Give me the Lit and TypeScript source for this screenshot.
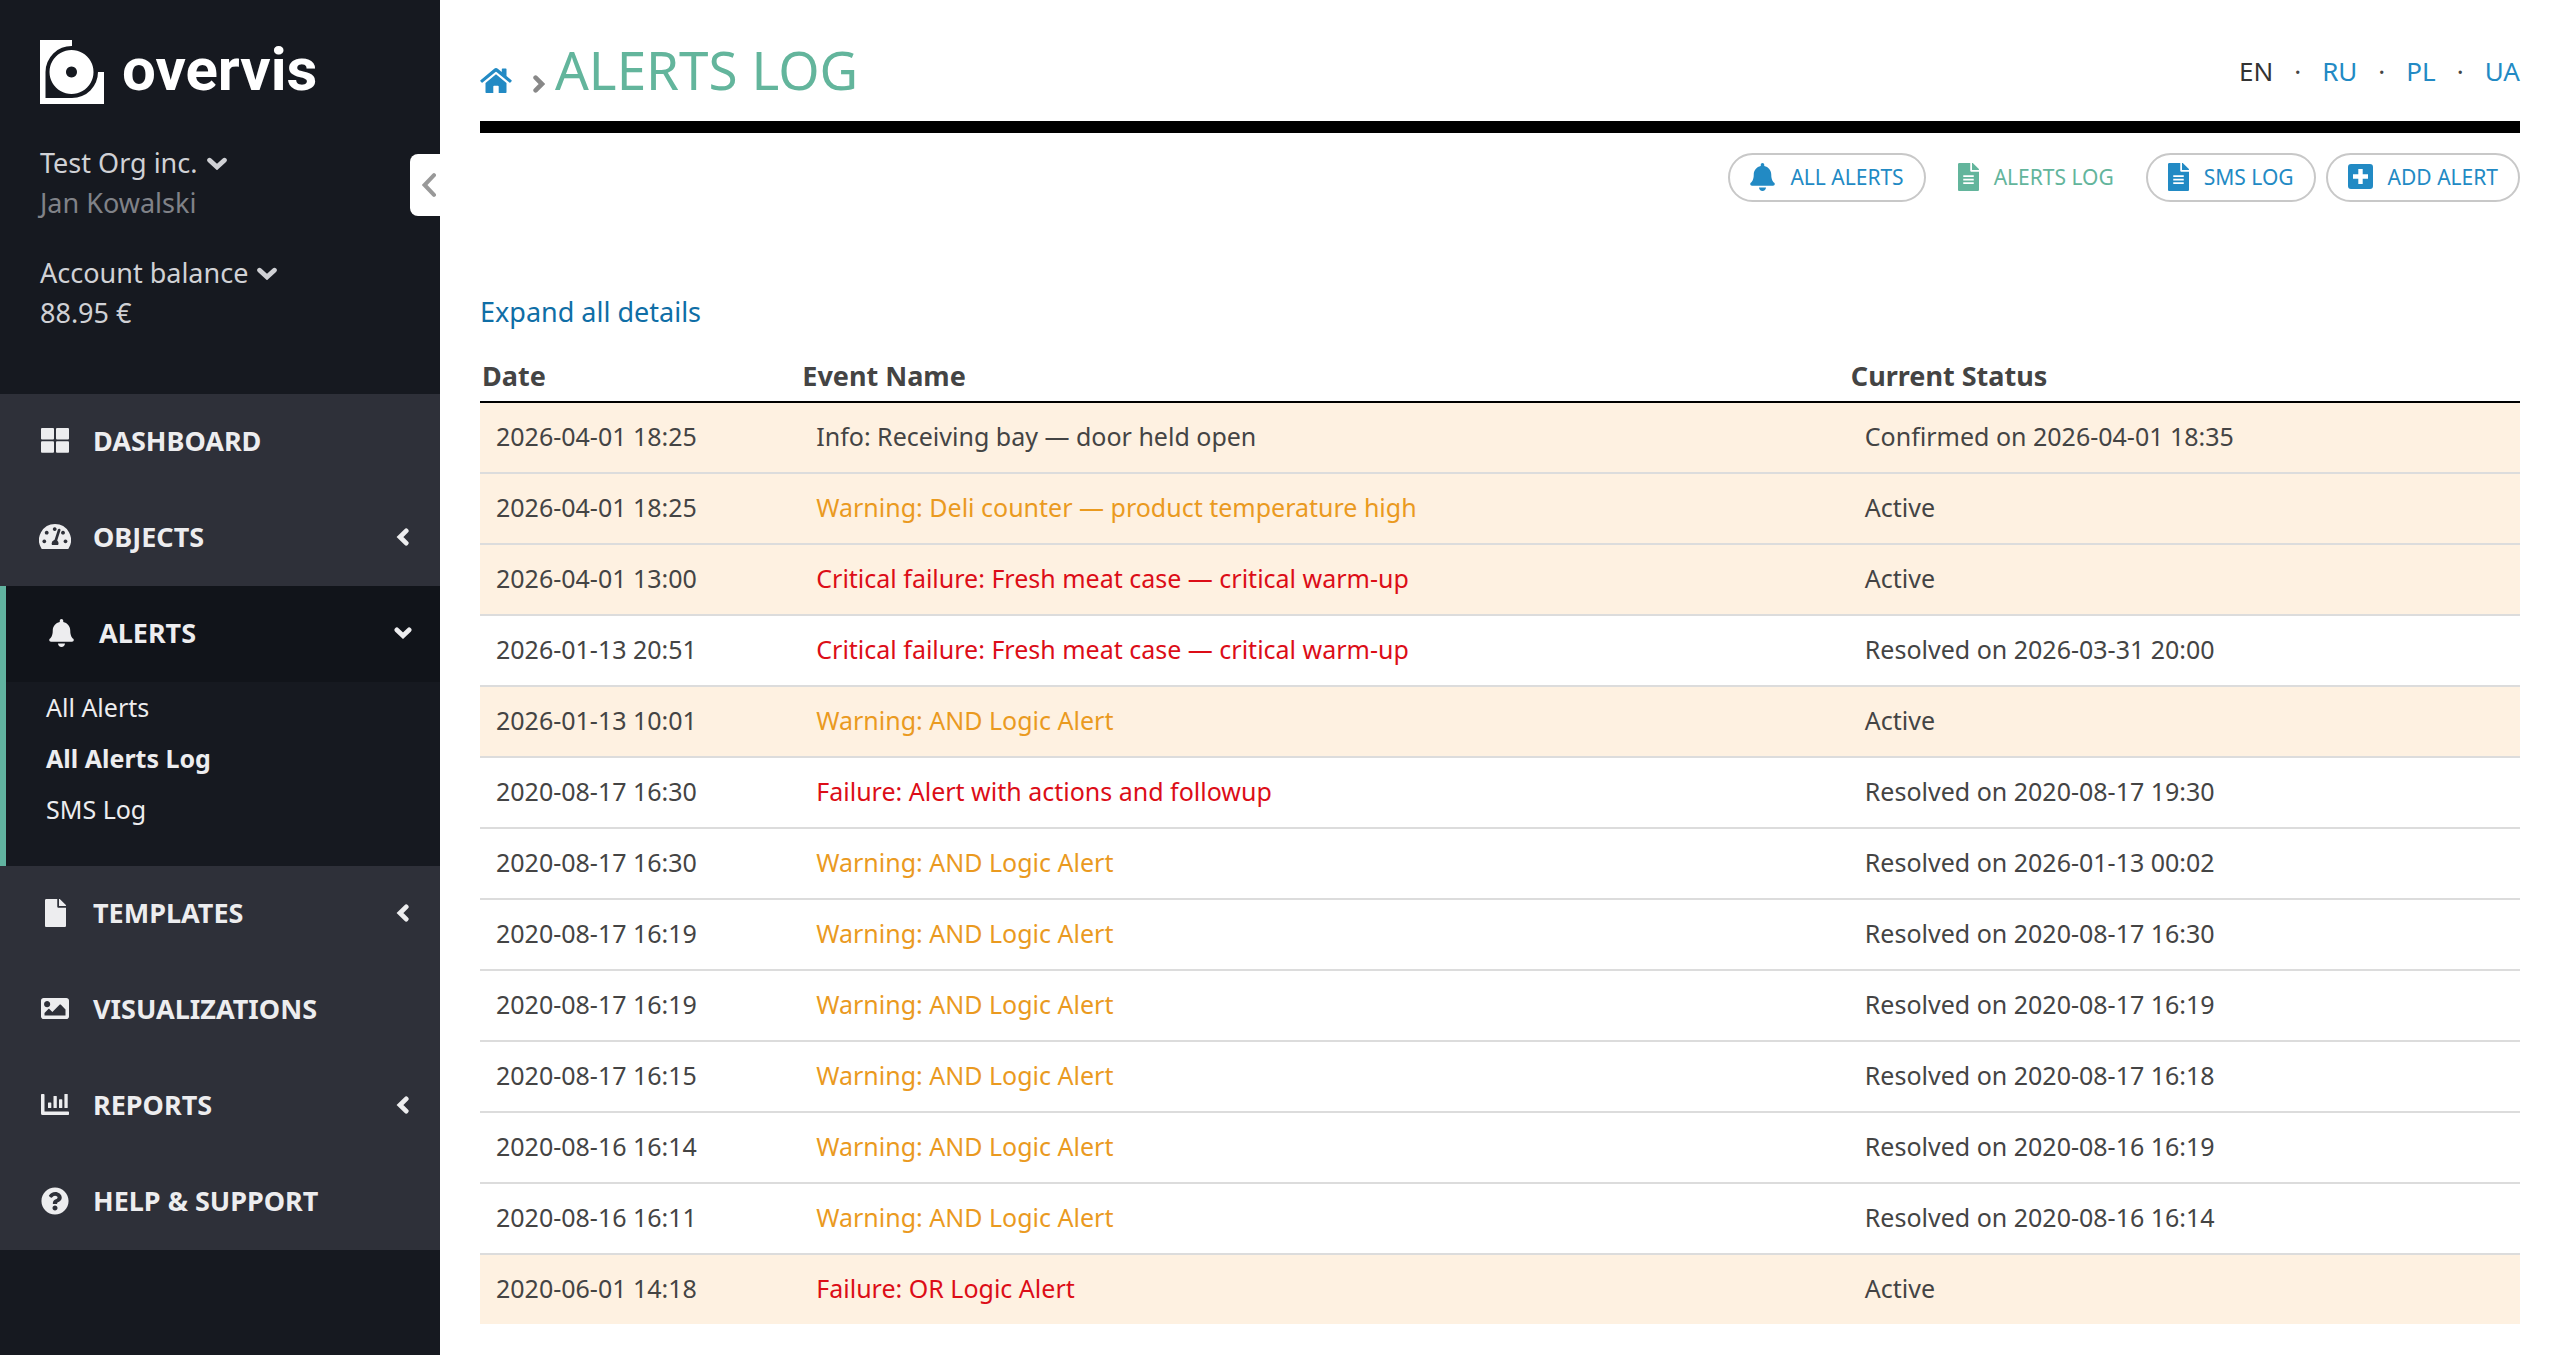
import { LitElement, html, css, svg } from "lit";
import { customElement, property, state } from "lit/decorators.js";
import { classMap } from "lit/directives/class-map.js";

const FILE_BODY =
  "M224 136V0H24C10.7 0 0 10.7 0 24v464c0 13.3 10.7 24 24 24h336c13.3 0 24-10.7 24-24V160H248c-13.2 0-24-10.8-24-24z";
const FILE_CORNER =
  "M384 121.900v6.100H256V0h6.100c6.400 0 12.500 2.500 17 7l97.900 98c4.500 4.500 7 10.600 7 16.900z";

type Glyph = { w: number; h: number; box: string; art: unknown };

const GLYPHS: Record<string, Glyph> = {
  grid: {
    w: 28,
    h: 25,
    box: "0 0 28 25",
    art: svg`<rect width="13" height="11.500" rx="1"/><rect x="15" width="13" height="11.500" rx="1"/><rect y="13.300" width="13" height="11.500" rx="1"/><rect x="15" y="13.300" width="13" height="11.500" rx="1"/>`,
  },
  gauge: {
    w: 32,
    h: 25,
    box: "0 0 32 25",
    art: svg`<path fill-rule="evenodd" d="M16 0A16 16 0 0 0 2.400 24.400Q2.800 25 3.600 25H28.400Q29.200 25 29.600 24.400A16 16 0 0 0 16 0ZM15.700 3.200a1.900 1.900 0 1 0 .01 0ZM7.700 6.800a1.900 1.900 0 1 0 .01 0ZM24 6.800a1.900 1.900 0 1 0 .01 0ZM5.300 15.500a1.900 1.900 0 1 0 .01 0ZM26.500 15.500a1.900 1.900 0 1 0 .01 0ZM20.200 4.800Q21.600 4.800 21.500 6.200L18.200 16.500Q20.400 18.500 19 21H13Q11.600 17.500 15.600 15.700L18.900 5.600Q19.300 4.800 20.200 4.800Z"/>`,
  },
  bell: {
    w: 25,
    h: 28,
    box: "0 0 448 512",
    art: svg`<path d="M224 512c35.320 0 63.970-28.650 63.970-64H160.030c0 35.350 28.650 64 63.970 64zm215.390-149.710c-19.320-20.760-55.470-51.990-55.470-154.290 0-77.700-54.480-139.900-127.940-155.160V32c0-17.670-14.320-32-31.980-32s-31.980 14.330-31.980 32v20.840C118.560 68.100 64.080 130.300 64.080 208c0 102.300-36.150 133.530-55.470 154.290-6 6.450-8.660 14.160-8.610 21.710.11 16.400 12.980 32 32.100 32h383.800c19.120 0 32-15.600 32.100-32 .05-7.550-2.610-15.270-8.610-21.710z"/>`,
  },
  file: {
    w: 21,
    h: 28,
    box: "0 0 384 512",
    art: svg`<path d=${FILE_BODY}/><path d=${FILE_CORNER}/>`,
  },
  fileLines: {
    w: 21,
    h: 28,
    box: "0 0 384 512",
    art: svg`<path fill-rule="evenodd" d=${FILE_BODY + "M96 224V256H288V224ZM96 288V320H288V288ZM96 352V384H288V352Z"}/><path d=${FILE_CORNER}/>`,
  },
  image: {
    w: 28,
    h: 21,
    box: "0 64 512 384",
    art: svg`<path fill-rule="evenodd" d="M464 448H48c-26.510 0-48-21.490-48-48V112c0-26.510 21.490-48 48-48h416c26.510 0 48 21.490 48 48v288c0 26.510-21.490 48-48 48zM112 120c-30.928 0-56 25.072-56 56s25.072 56 56 56 56-25.072 56-56-25.072-56-56-56zM64 384h384V272l-87.515-87.515c-4.686-4.686-12.284-4.686-16.971 0L208 320l-55.515-55.515c-4.686-4.686-12.284-4.686-16.971 0L64 336v48z"/>`,
  },
  chart: {
    w: 28,
    h: 21,
    box: "0 0 28 21",
    art: svg`<path d="M0 .8Q0 0 .8 0H2.700Q3.500 0 3.500 .8V17.500H27.200Q28 17.500 28 18.300V20.200Q28 21 27.200 21H1.500Q0 21 0 19.500Z"/><rect x="7" y="8.500" width="3.300" height="5.500" rx=".6"/><rect x="12.500" y="2" width="3.300" height="12" rx=".6"/><rect x="18" y="5.300" width="3.300" height="8.700" rx=".6"/><rect x="23.400" y="0" width="3.300" height="14" rx=".6"/>`,
  },
  help: {
    w: 28,
    h: 28,
    box: "0 0 512 512",
    art: svg`<path fill-rule="evenodd" d="M504 256c0 136.997-111.043 248-248 248S8 392.997 8 256C8 119.083 119.043 8 256 8s248 111.083 248 248zM262.655 90c-54.497 0-89.255 22.957-116.549 63.758-3.536 5.286-2.353 12.415 2.715 16.258l34.699 26.310c5.205 3.947 12.621 3.008 16.665-2.122 17.864-22.658 30.113-35.797 57.303-35.797 20.429 0 45.698 13.148 45.698 32.958 0 14.976-12.363 22.667-32.534 33.976C247.128 238.528 216 254.941 216 296v4c0 6.627 5.373 12 12 12h56c6.627 0 12-5.373 12-12v-1.333c0-28.462 83.186-29.647 83.186-106.667 0-58.002-60.165-102-116.531-102zM256 338c-25.365 0-46 20.635-46 46 0 25.364 20.635 46 46 46s46-20.636 46-46c0-25.365-20.635-46-46-46z"/>`,
  },
  plus: {
    w: 25,
    h: 25,
    box: "0 0 25 25",
    art: svg`<path fill-rule="evenodd" d="M3 0H22Q25 0 25 3V22Q25 25 22 25H3Q0 25 0 22V3Q0 0 3 0ZM10.300 5V10.300H5V14.700H10.300V20H14.700V14.700H20V10.300H14.700V5Z"/>`,
  },
  home: {
    w: 32,
    h: 25,
    box: "0 0 32 25",
    art: svg`<path d="M16 0Q17 0 17.800 .7L21.800 4V1.200Q21.800 .5 22.500 .5H25.800Q26.500 .5 26.500 1.200V7.900L31.500 12.200Q32 12.700 31.600 13.200L30.400 14.600Q29.900 15 29.400 14.600L16.500 4Q16 3.700 15.500 4L2.600 14.600Q2.100 15 1.600 14.600L.4 13.200Q0 12.700 .5 12.200L14.200 .7Q15 0 16 0Z"/><path d="M16 6.300L26.500 15V24.200Q26.500 25 25.700 25H18.700V18.600Q18.700 17.800 17.900 17.800H14.100Q13.300 17.800 13.300 18.600V25H6.300Q5.500 25 5.500 24.200V15Z"/>`,
  },
  down: {
    w: 20,
    h: 13,
    box: "0 0 20 13",
    art: svg`<path class="line" stroke-width="4.800" d="M2.600 3.200L10 10L17.400 3.200"/>`,
  },
  downSmall: {
    w: 18,
    h: 12,
    box: "0 0 18 12",
    art: svg`<path class="line" stroke-width="4.800" d="M2.900 2.900L9 8.700L15.100 2.900"/>`,
  },
  left: {
    w: 18,
    h: 18,
    box: "0 0 18 18",
    art: svg`<path class="line" stroke-width="4.800" d="M12.200 2.900L6 9L12.200 15.100"/>`,
  },
  right: {
    w: 12,
    h: 18,
    box: "0 0 12 18",
    art: svg`<path class="line" stroke-width="4.600" d="M2.600 2.700L8.900 9L2.600 15.300"/>`,
  },
  collapse: {
    w: 14,
    h: 24,
    box: "0 0 14 24",
    art: svg`<path class="line" stroke-width="4" d="M12 2.200L2.600 12L12 21.800"/>`,
  },
};

@customElement("ov-icon")
class OvIcon extends LitElement {
  @property() name = "";
  static styles = css`
    :host {
      display: inline-flex;
      flex: none;
    }
    .glyph {
      display: block;
      fill: currentColor;
    }
    .line {
      fill: none;
      stroke: currentColor;
      stroke-linecap: round;
    }
  `;
  render() {
    const g = GLYPHS[this.name];
    return html`<svg class="glyph" width=${g.w} height=${g.h} viewBox=${g.box} aria-hidden="true">${g.art}</svg>`;
  }
}

type NavItem = { label: string; icon: string; children?: string[]; current?: string };

const NAV: NavItem[] = [
  { label: "DASHBOARD", icon: "grid" },
  { label: "OBJECTS", icon: "gauge", children: [] },
  { label: "ALERTS", icon: "bell", children: ["All Alerts", "All Alerts Log", "SMS Log"], current: "All Alerts Log" },
  { label: "TEMPLATES", icon: "file", children: [] },
  { label: "VISUALIZATIONS", icon: "image" },
  { label: "REPORTS", icon: "chart", children: [] },
  { label: "HELP & SUPPORT", icon: "help" },
];

@customElement("ov-sidebar")
class OvSidebar extends LitElement {
  @state() private open = "ALERTS";

  static styles = css`
    :host {
      display: block;
      position: relative;
      box-sizing: border-box;
      background: #161920;
      color: #d0d1d5;
      font-size: 27px;
      line-height: 40px;
    }
    button {
      font: inherit;
      color: inherit;
      background: none;
      border: 0;
      padding: 0;
      margin: 0;
      text-align: left;
      cursor: pointer;
    }
    a {
      color: inherit;
      text-decoration: none;
    }
    .brand {
      display: flex;
      align-items: center;
      gap: 18px;
      height: 64px;
      padding: 40px 40px 0;
      color: #fff;
    }
    .mark {
      display: block;
      fill: #fff;
    }
    .word {
      padding-bottom: 4px;
      font-family: Roboto, "Noto Sans", sans-serif;
      font-weight: 700;
      font-size: 60px;
      line-height: 64px;
    }
    .account {
      display: flex;
      flex-direction: column;
      align-items: flex-start;
      padding: 39px 40px 0;
    }
    .picker {
      display: flex;
      align-items: center;
      gap: 9px;
    }
    .user {
      color: #808288;
      margin-bottom: 30px;
    }
    .menu {
      list-style: none;
      margin: 61px 0 0;
      padding: 0;
      background: #2e3039;
      color: #ededef;
    }
    .item {
      display: flex;
      align-items: center;
      width: 100%;
      box-sizing: border-box;
      height: 96px;
      padding: 0 28px 3px 40px;
      font-weight: 700;
    }
    .slot {
      display: flex;
      justify-content: center;
      width: 30px;
      margin-right: 23px;
    }
    .label {
      flex: 1;
    }
    .active {
      border-left: 6px solid #61b3a0;
      background: #161920;
    }
    .active .item {
      background: #11141a;
    }
    .sub {
      list-style: none;
      margin: 0;
      padding: 0 40px 31px;
      font-size: 25px;
      line-height: 51px;
    }
    .current {
      font-weight: 700;
    }
    .tab {
      position: absolute;
      top: 154px;
      right: 0;
      display: flex;
      align-items: center;
      justify-content: flex-end;
      width: 30px;
      height: 62px;
      padding-right: 4px;
      border-radius: 8px 0 0 8px;
      background: #fff;
      color: #999;
    }
  `;

  private entry(item: NavItem) {
    const isOpen = item.label === this.open;
    const inner = html`<span class="slot"><ov-icon name=${item.icon}></ov-icon></span
      ><span class="label">${item.label}</span>
      ${item.children ? html`<ov-icon name=${isOpen ? "downSmall" : "left"}></ov-icon>` : ""}`;
    return html`<li class=${classMap({ active: isOpen })}>
      ${item.children
        ? html`<button
            class="item"
            aria-expanded=${isOpen ? "true" : "false"}
            @click=${() => (this.open = isOpen ? "" : item.label)}
          >
            ${inner}
          </button>`
        : html`<a class="item" href="#">${inner}</a>`}
      ${isOpen && item.children?.length
        ? html`<ul class="sub">
            ${item.children.map(
              (c) => html`<li><a href="#" class=${classMap({ current: c === item.current })}>${c}</a></li>`
            )}
          </ul>`
        : ""}
    </li>`;
  }

  render() {
    return html`
      <div class="brand">
        <svg class="mark" width="64" height="64" viewBox="0 0 64 64" aria-hidden="true">
          <path d="M0 0H32V6A26 26 0 0 0 5.500 32V58H32A26 26 0 0 0 58 32H64V64H0Z" />
          <path fill-rule="evenodd" d="M31.500 10A22 22 0 1 0 31.510 10ZM31.500 26.500A5.500 5.500 0 1 1 31.490 26.500Z" />
        </svg>
        <span class="word">overvis</span>
      </div>
      <div class="account">
        <button class="picker">Test Org inc.<ov-icon name="down"></ov-icon></button>
        <span class="user">Jan Kowalski</span>
        <button class="picker">Account balance<ov-icon name="down"></ov-icon></button>
        <span>88.95 €</span>
      </div>
      <nav>
        <ul class="menu">
          ${NAV.map((i) => this.entry(i))}
        </ul>
      </nav>
      <button class="tab" aria-label="Collapse menu"><ov-icon name="collapse"></ov-icon></button>
    `;
  }
}

type Level = "info" | "warning" | "failure";
type Row = { date: string; name: string; level: Level; status: string; open: boolean };

const row = (date: string, level: Level, name: string, status: string, open = false): Row => ({
  date,
  name,
  level,
  status,
  open,
});

const LOGIC = "Warning: AND Logic Alert";

const ROWS: Row[] = [
  row("2026-04-01 18:25", "info", "Info: Receiving bay — door held open", "Confirmed on 2026-04-01 18:35", true),
  row("2026-04-01 18:25", "warning", "Warning: Deli counter — product temperature high", "Active", true),
  row("2026-04-01 13:00", "failure", "Critical failure: Fresh meat case — critical warm-up", "Active", true),
  row("2026-01-13 20:51", "failure", "Critical failure: Fresh meat case — critical warm-up", "Resolved on 2026-03-31 20:00"),
  row("2026-01-13 10:01", "warning", LOGIC, "Active", true),
  row("2020-08-17 16:30", "failure", "Failure: Alert with actions and followup", "Resolved on 2020-08-17 19:30"),
  row("2020-08-17 16:30", "warning", LOGIC, "Resolved on 2026-01-13 00:02"),
  row("2020-08-17 16:19", "warning", LOGIC, "Resolved on 2020-08-17 16:30"),
  row("2020-08-17 16:19", "warning", LOGIC, "Resolved on 2020-08-17 16:19"),
  row("2020-08-17 16:15", "warning", LOGIC, "Resolved on 2020-08-17 16:18"),
  row("2020-08-16 16:14", "warning", LOGIC, "Resolved on 2020-08-16 16:19"),
  row("2020-08-16 16:11", "warning", LOGIC, "Resolved on 2020-08-16 16:14"),
  row("2020-06-01 14:18", "failure", "Failure: OR Logic Alert", "Active", true),
];

const TOOLS = [
  { label: "ALL ALERTS", icon: "bell" },
  { label: "ALERTS LOG", icon: "fileLines", current: true },
  { label: "SMS LOG", icon: "fileLines" },
  { label: "ADD ALERT", icon: "plus" },
];

@customElement("app-root")
class AppRoot extends LitElement {
  static styles = css`
    :host {
      display: grid;
      grid-template-columns: 440px minmax(0, 1fr);
      min-height: 100vh;
      background: #fff;
      color: #444;
      font-family: "Noto Sans", "Open Sans", sans-serif;
      font-size: 27px;
      line-height: 40px;
    }
    a {
      color: #228ac4;
      text-decoration: none;
    }
    .page {
      padding: 34px 40px 0;
    }
    .head {
      display: flex;
      align-items: center;
      justify-content: space-between;
      padding-bottom: 15px;
      border-bottom: 12px solid #000;
    }
    .crumbs {
      display: flex;
      align-items: flex-end;
    }
    .home {
      display: flex;
      padding-bottom: 13px;
      margin-right: 21px;
    }
    .sep {
      padding-bottom: 13px;
      margin-right: 10px;
      color: #888;
    }
    .title {
      margin: 0;
      font-weight: 400;
      font-size: 53px;
      line-height: 72px;
      color: #63b59c;
    }
    .langs {
      display: flex;
      gap: 21px;
      padding-top: 2px;
      font-size: 26px;
    }
    .lang {
      color: #333;
    }
    .tools {
      display: flex;
      justify-content: flex-end;
      gap: 10px;
      margin-top: 20px;
    }
    .tool {
      display: flex;
      align-items: center;
      gap: 15px;
      box-sizing: border-box;
      height: 49px;
      padding: 0 20px 2px;
      border: 2px solid #c8c8c8;
      border-radius: 25px;
      font-size: 21px;
    }
    .tool.here {
      border-color: transparent;
      color: #63b59c;
    }
    .expand {
      display: block;
      margin: 90px 0 0;
      padding: 0;
      border: 0;
      background: none;
      font: inherit;
      color: #0f6ea6;
      cursor: pointer;
    }
    .log {
      width: 100%;
      margin-top: 24px;
      table-layout: fixed;
      border-collapse: separate;
      border-spacing: 0;
      text-align: left;
    }
    .c-date {
      width: 15.7%;
    }
    .c-name {
      width: 51.4%;
    }
    th {
      padding: 0 2px 5px;
      border-bottom: 2px solid #000;
      font-weight: 700;
    }
    td {
      padding: 14px 16px 17px;
      border-bottom: 2px solid #dcdcdc;
      font-size: 25px;
      line-height: 38px;
    }
    tr:last-child td {
      border-bottom: 0;
    }
    .open {
      background: #fef1e1;
    }
    .warning {
      color: #ea9a1f;
    }
    .failure {
      color: #dc0d17;
    }
  `;

  render() {
    return html`
      <ov-sidebar></ov-sidebar>
      <main class="page">
        <header class="head">
          <div class="crumbs">
            <a class="home" href="#" aria-label="Home"><ov-icon name="home"></ov-icon></a>
            <ov-icon class="sep" name="right"></ov-icon>
            <h1 class="title">ALERTS LOG</h1>
          </div>
          <div class="langs">
            <span class="lang">EN</span><span>·</span><a href="#">RU</a><span>·</span><a href="#">PL</a><span>·</span
            ><a href="#">UA</a>
          </div>
        </header>
        <nav class="tools">
          ${TOOLS.map(
            (t) => html`<a href="#" class=${classMap({ tool: true, here: !!t.current })}
              ><ov-icon name=${t.icon}></ov-icon><span>${t.label}</span></a
            >`
          )}
        </nav>
        <button class="expand">Expand all details</button>
        <table class="log">
          <colgroup>
            <col class="c-date" />
            <col class="c-name" />
            <col />
          </colgroup>
          <thead>
            <tr>
              <th scope="col">Date</th>
              <th scope="col">Event Name</th>
              <th scope="col">Current Status</th>
            </tr>
          </thead>
          <tbody>
            ${ROWS.map(
              (r) => html`<tr class=${classMap({ open: r.open })}>
                <td>${r.date}</td>
                <td class=${r.level}>${r.name}</td>
                <td>${r.status}</td>
              </tr>`
            )}
          </tbody>
        </table>
      </main>
    `;
  }
}
